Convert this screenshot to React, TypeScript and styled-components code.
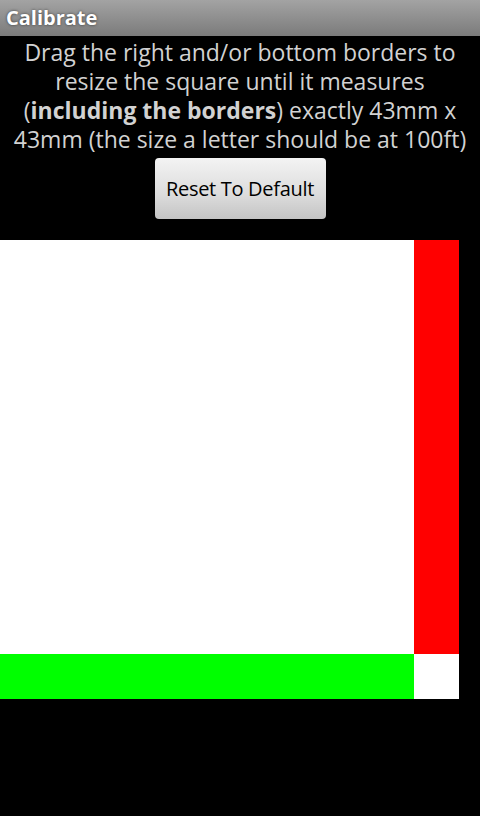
import React from 'react';
import styled, { createGlobalStyle } from 'styled-components';

const GlobalStyle = createGlobalStyle`
	html, body {
		margin: 0;
		padding: 0;
		background: #000;
	}
	body {
		font-family: 'Open Sans', 'DejaVu Sans', sans-serif;
	}
`;

const INNER = 414;
const BORDER = 45;

function App() {
	return (
		<Screen>
			<GlobalStyle />
			<TitleBar>Calibrate</TitleBar>
			<Instructions>
				Drag the right and/or bottom borders to
				<br />
				resize the square until it measures
				<br />(<strong>including the borders</strong>) exactly 43mm x
				<br />
				43mm (the size a letter should be at 100ft)
			</Instructions>
			<ButtonRow>
				<ResetButton type="button">Reset To Default</ResetButton>
			</ButtonRow>
			<Square>
				<Inner />
				<RightBorder />
				<BottomBorder />
				<Corner />
			</Square>
		</Screen>
	);
}

export default App;

const Screen = styled.div`
	width: 480px;
	height: 816px;
	background: #000;
	overflow: hidden;
	display: flex;
	flex-direction: column;
`;

const TitleBar = styled.div`
	height: 36px;
	line-height: 35px;
	padding-left: 6px;
	background: linear-gradient(#a3a3a3, #7b7b7b);
	color: #fff;
	font-family: 'Open Sans', sans-serif;
	font-weight: 700;
	font-size: 20px;
	text-shadow: 0 0 3px rgba(0, 0, 0, 0.6);
`;

const Instructions = styled.p`
	margin: 2px 0 0;
	padding: 0;
	color: #d2d2d2;
	font-size: 23px;
	line-height: 29px;
	text-align: center;
	white-space: nowrap;

	strong {
		font-weight: 700;
	}
`;

const ButtonRow = styled.div`
	display: flex;
	justify-content: center;
	padding-top: 4px;
`;

const ResetButton = styled.button`
	width: 171px;
	height: 61px;
	border: none;
	border-radius: 4px;
	background: linear-gradient(#f3f3f3, #dcdcdc 60%, #c4c4c4);
	color: #000;
	font-family: 'Open Sans', sans-serif;
	font-size: 20px;
	letter-spacing: -0.3px;
	padding: 0;
`;

const Square = styled.div`
	margin-top: 21px;
	display: grid;
	grid-template-columns: ${INNER}px ${BORDER}px;
	grid-template-rows: ${INNER}px ${BORDER}px;
	width: ${INNER + BORDER}px;
`;

const Inner = styled.div`
	background: #fff;
`;

const RightBorder = styled.div`
	background: #ff0000;
`;

const BottomBorder = styled.div`
	background: #00ff00;
`;

const Corner = styled.div`
	background: #fff;
`;
